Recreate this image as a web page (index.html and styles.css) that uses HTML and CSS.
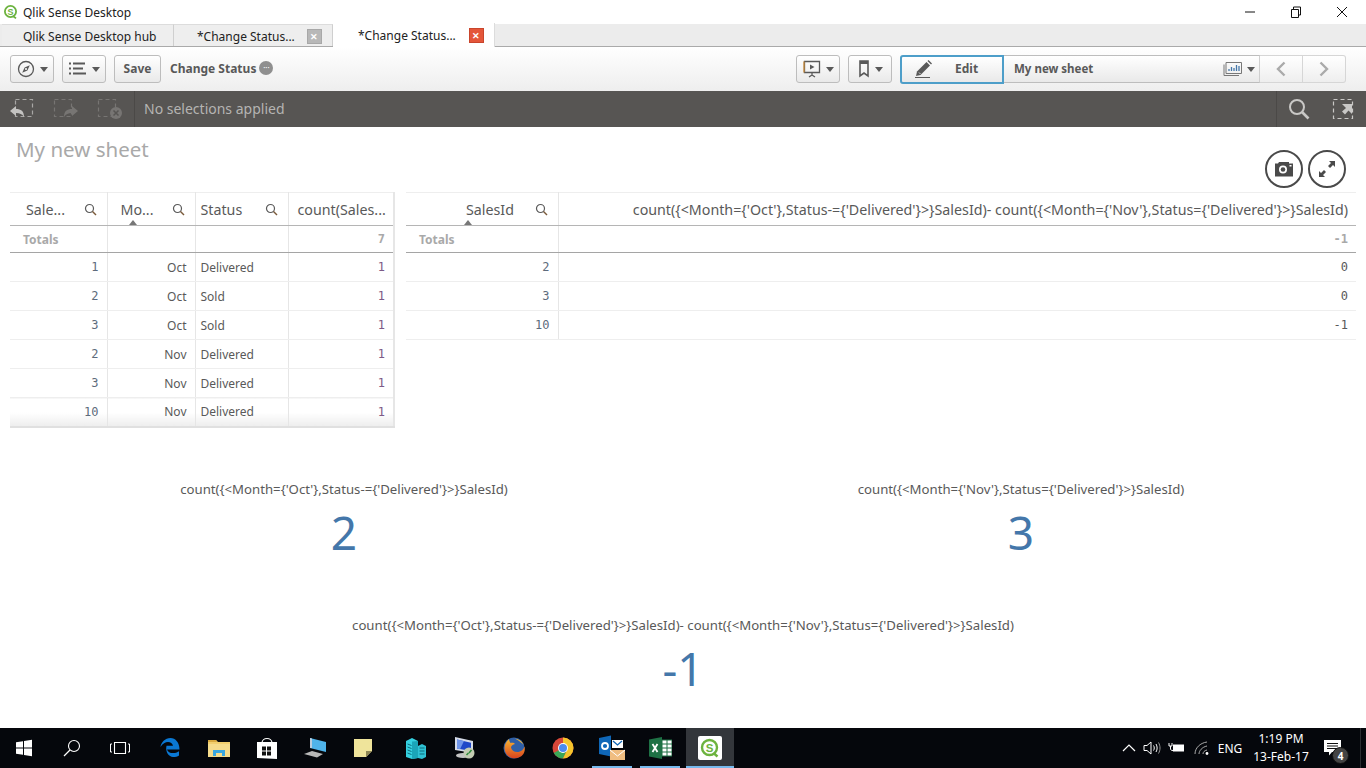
FILE: index.html
```html
<!DOCTYPE html>
<html lang="en">
<head>
<meta charset="UTF-8">
<meta name="viewport" content="width=device-width, initial-scale=1.0">
<title>Qlik Sense Desktop</title>
<link rel="stylesheet" href="styles.css">
</head>
<body>
<div class="app">
    <!-- Window title -->
    <div class="titlebar">
        <svg class="title-logo" width="16" height="16" viewBox="0 0 16 16"><circle cx="7.5" cy="7.5" r="5.6" fill="none" stroke="#6cb33f" stroke-width="1.8"/><path d="M10 12l3 2.4" stroke="#6cb33f" stroke-width="1.8" fill="none"/><text x="7.5" y="10.6" text-anchor="middle" font-family="Liberation Sans" font-size="9" font-weight="700" fill="#6cb33f">S</text></svg>
        <span class="title-text">Qlik Sense Desktop</span>
        <div class="window-btns">
            <svg width="46" height="22" viewBox="0 0 46 22"><path d="M18 11h10" stroke="#111" stroke-width="1"/></svg>
            <svg width="46" height="22" viewBox="0 0 46 22"><path d="M18.5 8.5h7v8h-7zM20.5 8.5v-2.5h7v8h-2" fill="none" stroke="#111" stroke-width="1"/></svg>
            <svg width="46" height="22" viewBox="0 0 46 22"><path d="M18 6l10 10M28 6l-10 10" stroke="#111" stroke-width="1"/></svg>
        </div>
    </div>

    <!-- Tabs -->
    <div class="tabstrip">
        <div class="tab tab-hub">Qlik Sense Desktop hub</div>
        <div class="tab tab-doc">*Change Status...<span class="tab-close">&#10005;</span></div>
        <div class="tab tab-doc tab-active">*Change Status...<span class="tab-close">&#10005;</span></div>
    </div>

    <!-- Toolbar -->
    <div class="toolbar">
        <button class="tool-btn tool-icon">
            <svg width="18" height="18" viewBox="0 0 18 18"><circle cx="9" cy="9" r="7.5" fill="none" stroke="#595959" stroke-width="1.3"/><path d="M12.8 5.2L10.4 10.4 5.2 12.8 7.6 7.6z" fill="#595959"/><circle cx="9" cy="9" r="1" fill="#fff"/></svg>
            <span class="caret"></span>
        </button>
        <button class="tool-btn tool-icon">
            <svg width="18" height="14" viewBox="0 0 18 14"><path d="M0 1.5h2M4 1.5h12M0 6.5h2M4 6.5h10M0 11.5h2M4 11.5h13" stroke="#595959" stroke-width="1.8" fill="none"/></svg>
            <span class="caret"></span>
        </button>
        <button class="tool-btn tool-save"><span class="lift">Save</span></button>
        <span class="app-name lift">Change Status</span>
        <span class="more-dot">&middot;&middot;&middot;</span>
        <div class="toolbar-right">
            <button class="tool-btn tool-icon">
                <svg width="18" height="18" viewBox="0 0 18 18"><path d="M1.5 1.5h15v11h-15z" fill="none" stroke="#595959" stroke-width="1.3"/><path d="M1 1.500v11" stroke="#c98a3a" stroke-width="1.3"/><path d="M7 4.500l4.500 2.500-4.500 2.500z" fill="#595959"/><path d="M9 12.500v3M6 17l3-2 3 2" stroke="#595959" stroke-width="1.300" fill="none"/></svg>
                <span class="caret"></span>
            </button>
            <button class="tool-btn tool-icon">
                <svg width="12" height="18" viewBox="0 0 12 18"><path d="M2 1h8v15l-4-3-4 3z" fill="none" stroke="#595959" stroke-width="1.600"/><path d="M2 1h8v3h-8z" fill="#595959"/></svg>
                <span class="caret"></span>
            </button>
            <button class="edit-btn">
                <svg width="20" height="20" viewBox="0 0 20 20"><path d="M2 17l1-4.500L12.500 3l3.500 3.500L6.500 16z" fill="#595959"/><path d="M13.500 2l1-1 3.500 3.500-1 1z" fill="#595959"/><path d="M5 13.500l1.500 1.500" stroke="#fff" stroke-width=".8"/><path d="M1 18.500h15" stroke="#595959" stroke-width="1"/></svg>
                <span class="lift">Edit</span>
            </button>
            <div class="sheet-picker">
                <span class="sheet-name lift">My new sheet</span>
                <svg width="20" height="16" viewBox="0 0 20 16"><path d="M3 12.500V1.500h15.500v11zM1 3.500v11h15" fill="none" stroke="#777" stroke-width="1"/><path d="M6 10V8M8.500 10V6M11 10V7M13.500 10V4M16 10V5" stroke="#4477aa" stroke-width="1.300"/></svg>
                <span class="caret"></span>
            </div>
            <button class="nav-btn nav-prev"><svg width="12" height="16" viewBox="0 0 12 16"><path d="M9.500 1.500L3 8l6.500 6.500" fill="none" stroke="#aaa" stroke-width="2.400"/></svg></button>
            <button class="nav-btn"><svg width="12" height="16" viewBox="0 0 12 16"><path d="M2.500 1.500L9 8l-6.500 6.500" fill="none" stroke="#aaa" stroke-width="2.400"/></svg></button>
        </div>
    </div>

    <!-- Selections bar -->
    <div class="selbar">
        <div class="sel-tools">
            <svg width="26" height="22" viewBox="0 0 26 22"><rect x="6.500" y="1.500" width="17" height="17" fill="none" stroke="#a8a7a5" stroke-width="1.200" stroke-dasharray="4 3"/><path d="M1 13l6-5v3c5 0 8 2 8 8-2-3-4-4-8-4v3z" fill="#c4c3c1"/></svg>
            <svg width="26" height="22" viewBox="0 0 26 22"><rect x="1.500" y="1.500" width="17" height="17" fill="none" stroke="#777573" stroke-width="1.200" stroke-dasharray="4 3"/><path d="M25 13l-6-5v3c-5 0-8 2-8 8 2-3 4-4 8-4v3z" fill="#777573"/></svg>
            <svg width="26" height="22" viewBox="0 0 26 22"><rect x="1.500" y="1.500" width="17" height="17" fill="none" stroke="#777573" stroke-width="1.200" stroke-dasharray="4 3"/><circle cx="19" cy="15" r="6" fill="#777573"/><path d="M16.500 12.500l5 5M21.500 12.500l-5 5" stroke="#575553" stroke-width="1.500"/></svg>
        </div>
        <div class="sel-text">No selections applied</div>
        <div class="sel-right">
            <svg width="22" height="22" viewBox="0 0 22 22"><circle cx="9" cy="9" r="7" fill="none" stroke="#c9c8c6" stroke-width="2"/><path d="M14 14l6.500 6.500" stroke="#c9c8c6" stroke-width="2.600"/></svg>
            <svg width="22" height="22" viewBox="0 0 22 22"><rect x="1.500" y="1.500" width="19" height="19" fill="none" stroke="#c9c8c6" stroke-width="1.200" stroke-dasharray="4 3"/><path d="M10 6h10v10l-3.500-3.500-3.500 4-3-3 4-3.500z" fill="#c9c8c6"/></svg>
        </div>
    </div>

    <!-- Sheet -->
    <div class="sheet">
        <div class="sheet-head">
            <h1 class="sheet-title">My new sheet</h1>
            <div class="sheet-actions">
                <span class="round-btn"><svg width="20" height="16" viewBox="0 0 20 16"><path d="M1 2.500h3l1-1.500h10v1.500h4v13h-18z" fill="#4a4a4a"/><circle cx="9" cy="8.500" r="4" fill="#fff"/><circle cx="9" cy="8.500" r="2.300" fill="#4a4a4a"/><rect x="15.500" y="4" width="2" height="1.500" fill="#fff"/></svg></span>
                <span class="round-btn"><svg width="20" height="20" viewBox="0 0 20 20"><path d="M12 2h6v6l-2-2-3 3-2-2 3-3zM8 18H2v-6l2 2 3-3 2 2-3 3z" fill="#4a4a4a"/></svg></span>
            </div>
        </div>

        <div class="tables">
            <table class="grid grid-left">
                <colgroup><col class="c-sales"><col class="c-month"><col class="c-status"><col class="c-count"></colgroup>
                <thead>
                    <tr>
                        <th><span class="th-in">Sale...<svg class="th-search" width="13" height="13" viewBox="0 0 13 13"><circle cx="5.500" cy="5.500" r="4" fill="none" stroke="#595959" stroke-width="1.200"/><path d="M8.500 8.500l3.500 3.500" stroke="#7a5a3a" stroke-width="1.400"/></svg></span></th>
                        <th class="sorted"><span class="th-in">Mo...<svg class="th-search" width="13" height="13" viewBox="0 0 13 13"><circle cx="5.500" cy="5.500" r="4" fill="none" stroke="#595959" stroke-width="1.200"/><path d="M8.500 8.500l3.500 3.500" stroke="#7a5a3a" stroke-width="1.400"/></svg></span></th>
                        <th><span class="th-in">Status<svg class="th-search" width="13" height="13" viewBox="0 0 13 13"><circle cx="5.500" cy="5.500" r="4" fill="none" stroke="#595959" stroke-width="1.200"/><path d="M8.500 8.500l3.500 3.500" stroke="#7a5a3a" stroke-width="1.400"/></svg></span></th>
                        <th class="th-plain">count(Sales...</th>
                    </tr>
                </thead>
                <tbody>
                    <tr class="totals"><td>Totals</td><td></td><td></td><td class="num">7</td></tr>
                    <tr><td class="num key">1</td><td class="right">Oct</td><td>Delivered</td><td class="num measure">1</td></tr>
                    <tr><td class="num key">2</td><td class="right">Oct</td><td>Sold</td><td class="num measure">1</td></tr>
                    <tr><td class="num key">3</td><td class="right">Oct</td><td>Sold</td><td class="num measure">1</td></tr>
                    <tr><td class="num key">2</td><td class="right">Nov</td><td>Delivered</td><td class="num measure">1</td></tr>
                    <tr><td class="num key">3</td><td class="right">Nov</td><td>Delivered</td><td class="num measure">1</td></tr>
                    <tr class="last"><td class="num key">10</td><td class="right">Nov</td><td>Delivered</td><td class="num measure">1</td></tr>
                </tbody>
            </table>

            <table class="grid grid-right">
                <colgroup><col class="c-id"><col></colgroup>
                <thead>
                    <tr>
                        <th class="sorted sorted-id"><span class="th-in th-id">SalesId<svg class="th-search" width="13" height="13" viewBox="0 0 13 13"><circle cx="5.500" cy="5.500" r="4" fill="none" stroke="#595959" stroke-width="1.200"/><path d="M8.500 8.500l3.500 3.500" stroke="#7a5a3a" stroke-width="1.400"/></svg></span></th>
                        <th class="th-plain th-expr">count({&lt;Month={'Oct'},Status-={'Delivered'}&gt;}SalesId)- count({&lt;Month={'Nov'},Status={'Delivered'}&gt;}SalesId)</th>
                    </tr>
                </thead>
                <tbody>
                    <tr class="totals"><td>Totals</td><td class="num">-1</td></tr>
                    <tr><td class="num key">2</td><td class="num">0</td></tr>
                    <tr><td class="num key">3</td><td class="num">0</td></tr>
                    <tr><td class="num key">10</td><td class="num">-1</td></tr>
                </tbody>
            </table>
        </div>

        <div class="kpis">
            <div class="kpi">
                <div class="kpi-label">count({&lt;Month={'Oct'},Status-={'Delivered'}&gt;}SalesId)</div>
                <div class="kpi-value">2</div>
            </div>
            <div class="kpi">
                <div class="kpi-label">count({&lt;Month={'Nov'},Status={'Delivered'}&gt;}SalesId)</div>
                <div class="kpi-value">3</div>
            </div>
            <div class="kpi kpi-wide">
                <div class="kpi-label">count({&lt;Month={'Oct'},Status-={'Delivered'}&gt;}SalesId)- count({&lt;Month={'Nov'},Status={'Delivered'}&gt;}SalesId)</div>
                <div class="kpi-value">-1</div>
            </div>
        </div>
    </div>

    <!-- Windows taskbar -->
    <div class="taskbar">
        <div class="task"><svg width="18" height="18" viewBox="0 0 18 18"><path d="M1 3.200l7-1v6.300H1zM9 2l8-1.200v7.700H9zM1 9.500h7v6.300l-7-1zM9 9.500h8v7.700l-8-1.200z" fill="#fff"/></svg></div>
        <div class="task"><svg width="18" height="18" viewBox="0 0 18 18"><circle cx="11" cy="7" r="5.500" fill="none" stroke="#fff" stroke-width="1.100"/><path d="M7 11l-6 6" stroke="#fff" stroke-width="1.200"/></svg></div>
        <div class="task"><svg width="20" height="14" viewBox="0 0 20 14"><path d="M4.500 1.500h11v11h-11z" fill="none" stroke="#fff" stroke-width="1.100"/><path d="M2 3H.5v8H2M18 3h1.500v8H18" fill="none" stroke="#fff" stroke-width="1"/></svg></div>
        <div class="task gap3"><svg width="22" height="22" viewBox="0 0 22 22"><path d="M3 12.500h16.500C19.500 5.500 15.500 1 10.500 1 5 1 1 5.500.5 10c2-3.500 5-5 7.500-5 2.500 0 4.500 1.500 5 3.800H6.500C5 15 9 20 13 20c2.500 0 4.500-.5 6-1.500v-4.300c-4 3-11 2.500-12-1.700z" fill="#0a78d4"/></svg></div>
        <div class="task"><svg width="22" height="18" viewBox="0 0 22 18"><path d="M0 1h8l2 2h12v15H0z" fill="#f2cf6f"/><path d="M0 1h8l1 2H0z" fill="#d9a93f"/><path d="M0 5h22v13H0z" fill="#f6dc8c"/><path d="M5 11h12v6h-3v-3H8v3H5z" fill="#3aa7e0"/></svg></div>
        <div class="task"><svg width="22" height="24" viewBox="0 0 22 24"><path d="M1 6h20v17l-20-1z" fill="#fff"/><path d="M6 7C6 1 16 1 16 7" fill="none" stroke="#fff" stroke-width="1.200"/><path d="M6 10.500h4v4H6zM11 10.500h4v4h-4zM6 15.500h4v4H6zM11 15.500h4v4h-4z" fill="#111"/></svg></div>
        <div class="task"><svg width="24" height="22" viewBox="0 0 24 22"><path d="M7 1l16 4v10L7 11z" fill="#4fb3ea"/><path d="M7 1l2 .5V11l-2 0z" fill="#bcd"/><path d="M1 17l8-3 11 3-6 3.500z" fill="#b8b8b8"/></svg></div>
        <div class="task"><svg width="18" height="18" viewBox="0 0 18 18"><path d="M0 0h18v12l-6 6H0z" fill="#efe49b"/><path d="M18 12h-6v6z" fill="#8d8654"/></svg></div>
        <div class="task gap5"><svg width="22" height="22" viewBox="0 0 22 22"><path d="M1 4l6-3 6 3v17l-6 1-6-2z" fill="#35d0e0"/><path d="M7 4.500l6-.5v17l-6 1z" fill="#1ba5b8"/><path d="M13 9l4-2 4 2v11l-4 2-4-1z" fill="#2fc1d4"/><path d="M2.500 7l4 1.500M2.500 10l4 1.500M2.500 13l4 1.500M2.500 16l4 1.500M14.500 11l5 0M14.500 14l5 0M14.500 17l5 0" stroke="#0c6c7c" stroke-width="1"/></svg></div>
        <div class="task"><svg width="24" height="24" viewBox="0 0 24 24"><path d="M3 1l18 4v12l-18-3z" fill="#d5dbe8"/><path d="M5 3.500l14 3.200v8.300L5 12.500z" fill="#1f48c8"/><path d="M5 3.500l7 1.600-4 8.200-3-.8z" fill="#6f95ea"/><ellipse cx="11" cy="19.500" rx="7" ry="2.500" fill="#c4c4c4"/><circle cx="17" cy="17" r="5.500" fill="#c4ccb4"/><path d="M14.500 19l2-2M17 17l2.500-3" stroke="#2e8b3d" stroke-width="1.500"/></svg></div>
        <div class="task gap2"><svg width="22" height="22" viewBox="0 0 22 22"><defs><linearGradient id="fox" x1="0" y1="0" x2="0" y2="1"><stop offset="0" stop-color="#f7b733"/><stop offset="1" stop-color="#d9431e"/></linearGradient></defs><circle cx="11" cy="11" r="10.500" fill="#2f5fa8"/><path d="M12 1.500c4 .5 7 2.500 8.500 6.500-1.500-2-4-4-8.500-6.500z" fill="#f7b733"/><path d="M6 2C1 6 0 13 4 18c4 4.500 12 4.500 16-.5 2-2.500 2-6 1.500-8-1 3-3 5-6 5.500-4 .5-7-1.500-7.500-4.500 0-2 2-3 4-3.500-1-1.500-3-1.500-4.500-1C6.500 4.500 6 3 6 2z" fill="url(#fox)"/></svg></div>
        <div class="task gap1"><svg width="22" height="22" viewBox="0 0 22 22"><circle cx="11" cy="11" r="10.500" fill="#d8473a"/><path d="M11 11L1.800 16A10.500 10.500 0 0 0 11 21.500L16 11z" fill="#3aa757"/><path d="M11 .5A10.500 10.500 0 0 1 21.500 11 10.500 10.500 0 0 1 11 21.500L16 11H11z" fill="#f5c42c"/><path d="M2 5.700L6.500 13 11 11z" fill="#d8473a"/><circle cx="11" cy="11" r="5" fill="#fff"/><circle cx="11" cy="11" r="4" fill="#4c8bf0"/></svg></div>
        <div class="task gap1 running"><svg width="26" height="26" viewBox="0 0 26 26"><path d="M0 3l12-2.500v21L0 19z" fill="#0f67b8"/><circle cx="6" cy="11" r="3" fill="none" stroke="#fff" stroke-width="1.800"/><path d="M13 5h11v8H13z" fill="#fff"/><path d="M14 6l4.500 4L23 6" fill="none" stroke="#0f67b8" stroke-width="1.300"/><path d="M11 15h15v10H11z" fill="#f0bd80"/><path d="M11 15l7.500 6 7.500-6" fill="none" stroke="#fff" stroke-width="1"/></svg></div>
        <div class="task running"><svg width="23" height="22" viewBox="0 0 23 22"><path d="M0 2.500L13 0v22L0 19.500z" fill="#1e7145"/><path d="M13 3h10v16H13z" fill="#fff" stroke="#1e7145"/><path d="M13 7h10M13 11h10M13 15h10M18 3v16" stroke="#1e7145" stroke-width="1"/><path d="M3.500 7l5 8M8.500 7l-5 8" stroke="#fff" stroke-width="1.800"/></svg></div>
        <div class="task gap2 active running"><span class="qlik-tile"><svg width="20" height="20" viewBox="0 0 20 20"><circle cx="9.500" cy="9.500" r="7.500" fill="none" stroke="#6cb33f" stroke-width="2.400"/><path d="M13.500 15l4 3.500" stroke="#6cb33f" stroke-width="2.400"/><text x="9.500" y="13.500" text-anchor="middle" font-family="Liberation Sans" font-size="11.500" font-weight="700" fill="#6cb33f">S</text></svg></span></div>
        <div class="tray">
            <svg class="tray-chevron" width="14" height="8" viewBox="0 0 14 8"><path d="M1 7l6-6 6 6" fill="none" stroke="#fff" stroke-width="1.200"/></svg>
            <svg class="tray-sound" width="18" height="14" viewBox="0 0 18 14"><path d="M1 4.500h3L8 1v12L4 9.500H1z" fill="none" stroke="#fff" stroke-width="1"/><path d="M10.500 4.500c1 1.500 1 3.500 0 5M13 3c1.500 2.500 1.500 5.500 0 8" fill="none" stroke="#fff" stroke-width="1"/><path d="M15.500 1.500c2 3.500 2 7.500 0 11" fill="none" stroke="#999" stroke-width="1"/></svg>
            <svg class="tray-battery" width="17" height="12" viewBox="0 0 17 12"><path d="M5 2.500h11v7H5z" fill="#fff"/><path d="M1 1v3h3V1M2.500 4v3c0 1 1 1.500 2.500 1.500" fill="none" stroke="#fff" stroke-width="1"/></svg>
            <svg class="tray-wifi" width="16" height="14" viewBox="0 0 16 14"><path d="M1 13C1 7 6 2 13 1M5 13c0-3 3-7 8-8M9 13c0-2 1.500-3.500 4-4" fill="none" stroke="#aaa" stroke-width="1"/><circle cx="13" cy="12.500" r="1.400" fill="#fff"/></svg>
            <span class="tray-lang">ENG</span>
            <div class="clock"><span>1:19 PM</span><span>13-Feb-17</span></div>
            <div class="notify">
                <svg width="17" height="16" viewBox="0 0 17 16"><path d="M0 0h17v12H8l-3 3.500V12H0z" fill="#fff"/><path d="M3 3.500h11M3 6h11M3 8.500h11" stroke="#111" stroke-width="1"/></svg>
                <span class="notify-badge">4</span>
            </div>
        </div>
    </div>
</div>
</body>
</html>
```

FILE: styles.css
```css
/* Qlik Sense Desktop window */
html, body {
    margin: 0;
    height: 100%;
    overflow: hidden;
}

body {
    font-family: "Noto Sans", "Liberation Sans", sans-serif;
    color: #595959;
    background: #fff;
}

.app {
    display: flex;
    flex-direction: column;
    width: 1366px;
    height: 768px;
}

button {
    font-family: inherit;
    padding: 0;
    cursor: pointer;
}

/* Noto sits a little low in these bars */
.lift {
    margin-top: -2px;
}

/* Title bar */
.titlebar {
    display: flex;
    align-items: center;
    height: 24px;
    padding-left: 3px;
    background: #fff;
    color: #222;
    flex: none;
}

.title-text {
    margin-left: 4px;
    font-size: 12px;
}

.window-btns {
    display: flex;
    margin-left: auto;
    margin-right: 1px;
}

/* Tabs */
.tabstrip {
    display: flex;
    align-items: flex-end;
    height: 22px;
    padding-left: 2px;
    background: #ececec;
    border-bottom: 1px solid #aaa;
    flex: none;
}

.tab {
    display: flex;
    align-items: center;
    height: 20px;
    padding-top: 1px;
    font-size: 12px;
    color: #222;
    background: #eeeeee;
    border-top: 1px solid #dcdcdc;
    border-right: 1px solid #cfcfcf;
}

.tab-hub {
    width: 150px;
    padding-left: 21px;
}

.tab-doc {
    width: 159px;
    height: 22px;
    box-sizing: border-box;
    padding-left: 23px;
}

.tab-close {
    display: flex;
    justify-content: center;
    align-items: center;
    width: 13px;
    height: 13px;
    margin-left: 12px;
    border: 1px solid #a8a8a8;
    font-size: 9px;
    font-weight: 700;
    color: #fff;
    background: #b8b8b8;
}

.tab-active {
    width: 162px;
    height: 24px;
    margin-bottom: -1px;
    padding-top: 0;
    background: #fff;
    border-top: 0;
    border-right: 1px solid #dcdcdc;
    padding-left: 25px;
}

.tab-active .tab-close {
    margin-left: 13px;
    background: #e4563a;
    border-color: #c9452c;
}

/* Toolbar */
.toolbar {
    display: flex;
    align-items: center;
    height: 44px;
    padding: 0 20px 0 10px;
    background: linear-gradient(#ffffff, #eeeeee);
    flex: none;
}

.tool-btn {
    display: flex;
    align-items: center;
    justify-content: center;
    box-sizing: border-box;
    height: 28px;
    border: 1px solid #bdbdbd;
    border-radius: 3px;
    background: linear-gradient(#ffffff, #e9e9e9);
    color: #595959;
}

.tool-icon {
    width: 44px;
    gap: 5px;
    margin-right: 8px;
}

.tool-save {
    width: 47px;
    font-size: 12px;
    font-weight: 700;
}

.caret {
    display: inline-block;
    width: 0;
    height: 0;
    border-left: 4px solid transparent;
    border-right: 4px solid transparent;
    border-top: 5px solid #595959;
}

.app-name {
    margin-left: 9px;
    font-size: 12px;
    font-weight: 700;
}

.more-dot {
    display: flex;
    justify-content: center;
    align-items: center;
    width: 14px;
    height: 14px;
    margin-left: 3px;
    margin-top: -2px;
    border-radius: 50%;
    background: #8f8f8f;
    color: #fff;
    font-size: 8px;
    line-height: 1;
}

.toolbar-right {
    display: flex;
    align-items: center;
    margin-left: auto;
}

.edit-btn {
    display: flex;
    align-items: center;
    box-sizing: border-box;
    width: 104px;
    height: 29px;
    padding-left: 12px;
    border: 2px solid #4d9ec9;
    border-radius: 3px 0 0 3px;
    background: linear-gradient(#ffffff, #e9e9e9);
    font-size: 12px;
    font-weight: 700;
    color: #595959;
}

.edit-btn span {
    margin-left: 21px;
}

.sheet-picker {
    display: flex;
    align-items: center;
    box-sizing: border-box;
    width: 256px;
    height: 28px;
    padding: 0 4px 0 10px;
    border-top: 1px solid #bdbdbd;
    border-bottom: 1px solid #bdbdbd;
    border-right: 1px solid #cfcfcf;
    background: linear-gradient(#ffffff, #e9e9e9);
}

.sheet-name {
    font-size: 11.5px;
    font-weight: 700;
    margin-right: auto;
}

.sheet-picker .caret {
    margin-left: 4px;
}

.nav-btn {
    display: flex;
    align-items: center;
    justify-content: center;
    box-sizing: border-box;
    width: 43px;
    height: 28px;
    border: 1px solid #d6d6d6;
    border-left: 0;
    background: linear-gradient(#ffffff, #eeeeee);
}

.nav-btn:last-child {
    border-radius: 0 3px 3px 0;
}

/* Selections bar */
.selbar {
    display: flex;
    align-items: center;
    height: 36px;
    background: #575553;
    flex: none;
}

.sel-tools {
    display: flex;
    align-items: center;
    gap: 18px;
    box-sizing: border-box;
    width: 135px;
    height: 36px;
    padding-left: 9px;
    border-right: 1px solid #4b4947;
}

.sel-text {
    margin-left: 9px;
    margin-top: -2px;
    font-size: 14px;
    color: #b5b4b2;
}

.sel-right {
    display: flex;
    align-items: center;
    gap: 22px;
    box-sizing: border-box;
    height: 36px;
    margin-left: auto;
    padding: 0 12px 0 11px;
    border-left: 1px solid #4b4947;
}

/* Sheet */
.sheet {
    display: flex;
    flex-direction: column;
    flex: 1;
    min-height: 0;
    padding: 0 10px;
}

.sheet-head {
    display: flex;
    justify-content: space-between;
    height: 65px;
    flex: none;
}

.sheet-title {
    margin: 8px 0 0 6px;
    font-size: 20.5px;
    line-height: 28px;
    font-weight: 400;
    color: #a9a9a9;
}

.sheet-actions {
    display: flex;
    gap: 5px;
    margin-top: 23px;
    margin-right: 10px;
}

.round-btn {
    display: flex;
    justify-content: center;
    align-items: center;
    box-sizing: border-box;
    width: 38px;
    height: 38px;
    border: 2px solid #4a4a4a;
    border-radius: 50%;
}

/* Tables */
.tables {
    display: flex;
    align-items: flex-start;
    gap: 11px;
    flex: none;
}

.grid {
    border-collapse: collapse;
    table-layout: fixed;
    font-size: 13px;
    border-top: 1px solid #eeeeee;
}

.grid-left {
    width: 385px;
    border-right: 2px solid #e6e6e6;
}

.grid-right {
    width: 950px;
}

.c-sales { width: 97px; }
.c-month { width: 88px; }
.c-status { width: 93px; }
.c-id { width: 152px; }

.grid th {
    height: 32px;
    padding: 0;
    font-size: 14.25px;
    font-weight: 400;
    text-align: left;
    white-space: nowrap;
    border-right: 1px solid #e6e6e6;
    border-bottom: 1px solid #b5b5b5;
    position: relative;
}

.grid th:last-child {
    border-right: 0;
}

.th-in {
    display: flex;
    align-items: center;
    padding: 0 10px 0 16px;
}

.grid-left th:nth-child(2) .th-in {
    padding-left: 13px;
}

.grid-left th:nth-child(3) .th-in {
    padding-left: 5px;
}

.th-id {
    padding-left: 60px;
}

.th-search {
    margin-left: auto;
}

.th-plain {
    padding-left: 9px !important;
}

.th-expr {
    padding-right: 8px !important;
    text-align: right !important;
}

/* little sort arrow under the header label */
.sorted::after {
    content: "";
    position: absolute;
    left: 21px;
    bottom: 0;
    width: 0;
    height: 0;
    border-left: 4px solid transparent;
    border-right: 4px solid transparent;
    border-bottom: 5px solid #777;
}

.sorted-id::after {
    left: 58px;
}

.grid td {
    box-sizing: border-box;
    height: 29px;
    padding: 0 8px 0 5px;
    font-size: 12px;
    border-right: 1px solid #e6e6e6;
    border-bottom: 1px solid #eeeeee;
}

.grid td:last-child {
    border-right: 0;
}

.grid .totals td {
    height: 27px;
    font-weight: 700;
    color: #a9a9a9;
    border-bottom: 1px solid #a5a5a5;
}

.grid .totals td:first-child {
    padding-left: 13px;
}

.num {
    text-align: right;
    font-family: "DejaVu Sans Mono", monospace;
}

.right {
    text-align: right;
}

.key {
    color: #5d6b7c;
}

.measure {
    color: #7d5a86;
}

.grid .last td {
    background: linear-gradient(#ffffff 50%, #ededed);
    border-bottom: 2px solid #e0e0e0;
}

/* KPIs */
.kpis {
    display: grid;
    grid-template-columns: 668px 686px;
    flex: none;
}

.kpi {
    text-align: center;
}

.kpi-label {
    font-size: 13.2px;
    line-height: 16px;
    color: #595959;
}

.kpi-value {
    font-size: 46px;
    line-height: 70px;
    color: #4477aa;
}

.kpis .kpi:nth-child(-n+2) {
    padding-top: 53px;
}

.kpi-wide {
    grid-column: 1 / 3;
    padding-top: 50px;
    margin-left: -10px;
    margin-right: -2px;
}

/* Taskbar */
.taskbar {
    display: flex;
    align-items: stretch;
    height: 40px;
    background: #05070c;
    flex: none;
}

.task {
    display: flex;
    justify-content: center;
    align-items: center;
    box-sizing: border-box;
    width: 48px;
    position: relative;
}

.gap1 { margin-left: 1px; }
.gap2 { margin-left: 2px; }
.gap3 { margin-left: 3px; }
.gap5 { margin-left: 5px; }

.running::after {
    content: "";
    position: absolute;
    left: 4px;
    right: 4px;
    bottom: 0;
    height: 2px;
    background: #76b9ed;
}

.active {
    background: #33363b;
}

.active.running::after {
    left: 0;
    right: 0;
}

.qlik-tile {
    display: flex;
    justify-content: center;
    align-items: center;
    width: 24px;
    height: 24px;
    border-radius: 2px;
    background: #fff;
}

.tray {
    display: flex;
    align-items: center;
    margin-left: auto;
    padding-right: 5px;
    color: #fff;
}

/* show desktop sliver at the far right */
.tray::after {
    content: "";
    width: 1px;
    height: 40px;
    background: #2b2d31;
}

.tray-chevron { margin-right: 7px; }
.tray-sound { margin-right: 7px; }
.tray-battery { margin-right: 9px; }
.tray-wifi { margin-right: 7px; }

.tray-lang {
    width: 26px;
    font-size: 12px;
    text-align: center;
}

.clock {
    display: flex;
    flex-direction: column;
    align-items: center;
    width: 76px;
    font-size: 12px;
    line-height: 18px;
}

.notify {
    display: flex;
    justify-content: flex-end;
    box-sizing: border-box;
    width: 27px;
    position: relative;
    padding-right: 5px;
    margin-right: 14px;
}

.notify-badge {
    position: absolute;
    right: -3px;
    top: 7px;
    display: flex;
    justify-content: center;
    align-items: center;
    width: 15px;
    height: 15px;
    border-radius: 50%;
    background: #444;
    border: 1px solid #111;
    font-size: 10px;
    font-weight: 700;
}
```
